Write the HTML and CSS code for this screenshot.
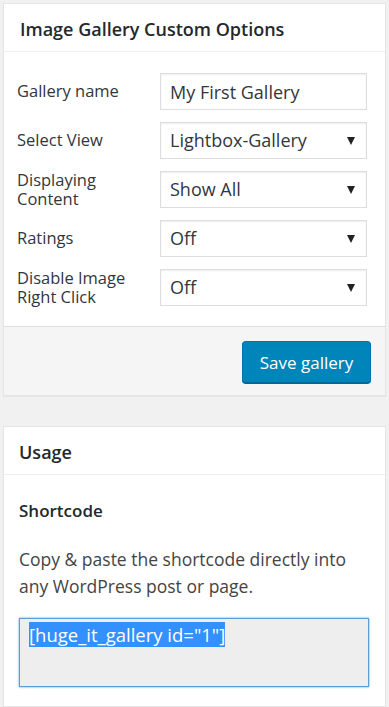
FILE: index.html
```html
<!DOCTYPE html>
<html lang="en">
<head>
    <meta charset="UTF-8">
    <title>Image Gallery Custom Options</title>
    <link rel="stylesheet" href="styles.css">
</head>
<body>
    <div class="postbox">
        <h3 class="postbox-title">Image Gallery Custom Options</h3>
        <div class="options">
            <label class="opt-label" for="name">Gallery name</label>
            <input class="opt-input" id="name" type="text" value="My First Gallery">

            <label class="opt-label">Select View</label>
            <div class="select">Lightbox-Gallery</div>

            <label class="opt-label two-lines">Displaying<br>Content</label>
            <div class="select">Show All</div>

            <label class="opt-label">Ratings</label>
            <div class="select">Off</div>

            <label class="opt-label two-lines">Disable Image<br>Right Click</label>
            <div class="select">Off</div>
        </div>
        <div class="major-actions">
            <button class="button-primary">Save gallery</button>
        </div>
    </div>

    <div class="postbox usage">
        <h3 class="postbox-title">Usage</h3>
        <div class="usage-inside">
            <h4 class="usage-sub">Shortcode</h4>
            <p class="usage-text">Copy &amp; paste the shortcode directly into<br>any WordPress post or page.</p>
            <div class="shortcode-box"><span class="selected">[huge_it_gallery id="1"]</span></div>
        </div>
    </div>
</body>
</html>
```

FILE: styles.css
```css
body {
    margin: 0;
    padding: 3px;
    background-color: #f1f1f1;
    font-family: "Open Sans", "Noto Sans", sans-serif;
    color: #23282d;
}

.postbox {
    background-color: #fff;
    border: 1px solid #e5e5e5;
    box-shadow: 0 1px 1px rgba(0, 0, 0, 0.04);
}

.postbox-title {
    margin: 0;
    height: 48px;
    line-height: 50px;
    padding: 0 16px;
    font-size: 18px;
    font-weight: 600;
    border-bottom: 1px solid #eee;
    box-sizing: border-box;
}

.options {
    display: grid;
    grid-template-columns: 143px minmax(0, 1fr);
    row-gap: 12px;
    align-items: center;
    padding: 21px 18px 20px 13px;
}

.opt-label {
    font-size: 16.5px;
    color: #32373c;
    line-height: 18.5px;
}

.opt-input,
.select {
    width: 100%;
    height: 37px;
    box-sizing: border-box;
    border: 1px solid #ddd;
    box-shadow: inset 0 1px 2px rgba(0, 0, 0, 0.07);
    font-family: inherit;
    font-size: 18px;
    color: #32373c;
    padding: 0 9px;
    margin: 0;
    background: #fff;
}

.select {
    position: relative;
    line-height: 35px;
}

/* petite flèche du select */
.select::after {
    content: "";
    position: absolute;
    right: 11px;
    top: 14px;
    border-left: 4px solid transparent;
    border-right: 4px solid transparent;
    border-top: 8px solid #222;
}

.major-actions {
    background-color: #f5f5f5;
    border-top: 1px solid #ddd;
    padding: 14px 14px 12px;
    display: flex;
    justify-content: flex-end;
}

.button-primary {
    height: 42px;
    width: 129px;
    background-color: #0085ba;
    border: 1px solid #0073aa;
    border-bottom-color: #006799;
    box-shadow: 0 1px 0 #006799;
    border-radius: 4px;
    color: #fff;
    font-family: inherit;
    font-size: 17px;
    padding: 0;
}

.usage {
    margin-top: 30px;
}

.usage .postbox-title {
    padding-left: 15px;
}

.usage-inside {
    padding: 1px 16px 19px 15px;
}

.usage-sub {
    margin: 24px 0 0;
    font-size: 17px;
    font-weight: 600;
    line-height: 22px;
}

.usage-text {
    margin: 24px 0 0;
    font-size: 17.5px;
    line-height: 27px;
    color: #444;
}

.shortcode-box {
    margin-top: 18px;
    height: 69px;
    box-sizing: border-box;
    background-color: #eee;
    border: 1px solid #5b9dd9;
    box-shadow: 0 0 2px rgba(30, 140, 190, 0.8);
    padding: 3px 9px;
    font-size: 18.5px;
    line-height: 25px;
}

.selected {
    background-color: #3390ff;
    color: #fff;
}
```
